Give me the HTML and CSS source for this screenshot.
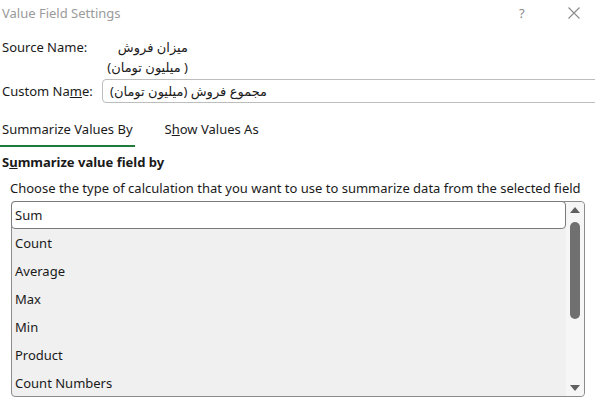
FILE: index.html
```html
<!DOCTYPE html>
<html lang="en">

<head>
    <meta charset="UTF-8" />
    <meta name="viewport" content="width=device-width, initial-scale=1.0" />
    <title>Value Field Settings</title>
    <link rel="stylesheet" href="styles.css">
</head>

<body>
    <div class="dialog">
        <header class="titlebar">
            <div class="title">Value Field Settings</div>
            <div class="help">?</div>
            <div class="close">
                <svg width="12" height="12" viewBox="0 0 12 12">
                    <path d="M0.5 0.5 L11.5 11.5 M11.5 0.5 L0.5 11.5" stroke="#8a8a8a" stroke-width="1.1" fill="none" />
                </svg>
            </div>
        </header>

        <div class="row source">
            <div class="label">Source Name:</div>
            <div class="source_value" dir="rtl">میزان فروش<br>(&nbsp;میلیون تومان)</div>
        </div>

        <div class="row custom">
            <div class="label">Custom Na<u>m</u>e:</div>
            <div class="input"><span dir="rtl">مجموع فروش (میلیون تومان)</span></div>
        </div>

        <ul class="tabs">
            <li class="tab active">Summarize Values By</li>
            <li class="tab">S<u>h</u>ow Values As</li>
        </ul>

        <div class="heading">S<u>u</u>mmarize value field by</div>
        <div class="desc">Choose the type of calculation that you want to use to summarize data from the selected field</div>

        <div class="listbox">
            <ul class="items">
                <li class="item selected">Sum</li>
                <li class="item">Count</li>
                <li class="item">Average</li>
                <li class="item">Max</li>
                <li class="item">Min</li>
                <li class="item">Product</li>
                <li class="item">Count Numbers</li>
            </ul>
            <div class="scrollbar">
                <div class="arrow up"></div>
                <div class="track">
                    <div class="thumb"></div>
                </div>
                <div class="arrow down"></div>
            </div>
        </div>
    </div>
</body>

</html>
```

FILE: styles.css
```css
html,
body {
    height: 100%;
    padding: 0;
    margin: 0;
    background: #fff;
}

ul,
li {
    list-style: none;
    padding: 0;
    margin: 0;
}

.dialog {
    font-family: "Noto Sans", "DejaVu Sans", sans-serif;
    font-size: 13px;
    color: #1a1a1a;
    overflow: hidden;
    height: 398px;
}

.titlebar {
    display: flex;
    align-items: center;
    height: 25px;
}

.title {
    flex: 1;
    padding-left: 2px;
    color: #9a9a9a;
    font-size: 13px;
}

.help {
    color: #8a8a8a;
    font-size: 13px;
    width: 20px;
    margin-right: 29px;
}

.close {
    width: 16px;
    margin-right: 11px;
    display: flex;
}

.row {
    display: flex;
    padding-left: 2px;
    overflow: hidden;
}

.label {
    flex: none;
    width: 100px;
    white-space: nowrap;
}

.source {
    margin-top: 12px;
    line-height: 20px;
}

.source_value {
    width: 86px;
}

.custom {
    margin-top: 2px;
    align-items: center;
}

.input {
    flex: none;
    width: 520px;
    height: 22px;
    border: 1px solid #bdbdbd;
    border-radius: 4px;
    display: flex;
    align-items: center;
    padding-left: 7px;
}

.tabs {
    display: flex;
    margin-top: 10px;
    height: 34px;
}

.tab {
    padding: 0 2px;
    line-height: 32px;
    margin-right: 28px;
}

.tab.active {
    border-bottom: 2px solid #1e7b3c;
}

.heading {
    font-weight: bold;
    padding-left: 2px;
    margin-top: 5px;
    line-height: 20px;
}

.desc {
    padding-left: 10px;
    margin-top: 7px;
    line-height: 18px;
}

.listbox {
    margin: 4px 10px 0 11px;
    height: 194px;
    border: 1px solid #8c8c8c;
    border-radius: 4px;
    background: #f0f0f0;
    display: flex;
}

.items {
    flex: 1;
}

.item {
    height: 28px;
    line-height: 28px;
    padding-left: 3px;
}

.item.selected {
    height: 26px;
    line-height: 26px;
    background: #fff;
    border: 1px solid #7a7a7a;
    border-radius: 4px;
    margin: -1px 0 0 -1px;
}

.scrollbar {
    width: 18px;
    background: #f6f6f6;
    display: flex;
    flex-direction: column;
    align-items: center;
    border-radius: 0 4px 4px 0;
}

.arrow {
    height: 16px;
    display: flex;
    align-items: center;
    justify-content: center;
}

.arrow.up::before {
    content: "";
    border-left: 5px solid transparent;
    border-right: 5px solid transparent;
    border-bottom: 6px solid #606060;
}

.arrow.down::before {
    content: "";
    border-left: 5px solid transparent;
    border-right: 5px solid transparent;
    border-top: 6px solid #606060;
}

.track {
    flex: 1;
    width: 10px;
}

.thumb {
    margin-top: 4px;
    height: 97px;
    background: #707070;
    border-radius: 5px;
}
```
